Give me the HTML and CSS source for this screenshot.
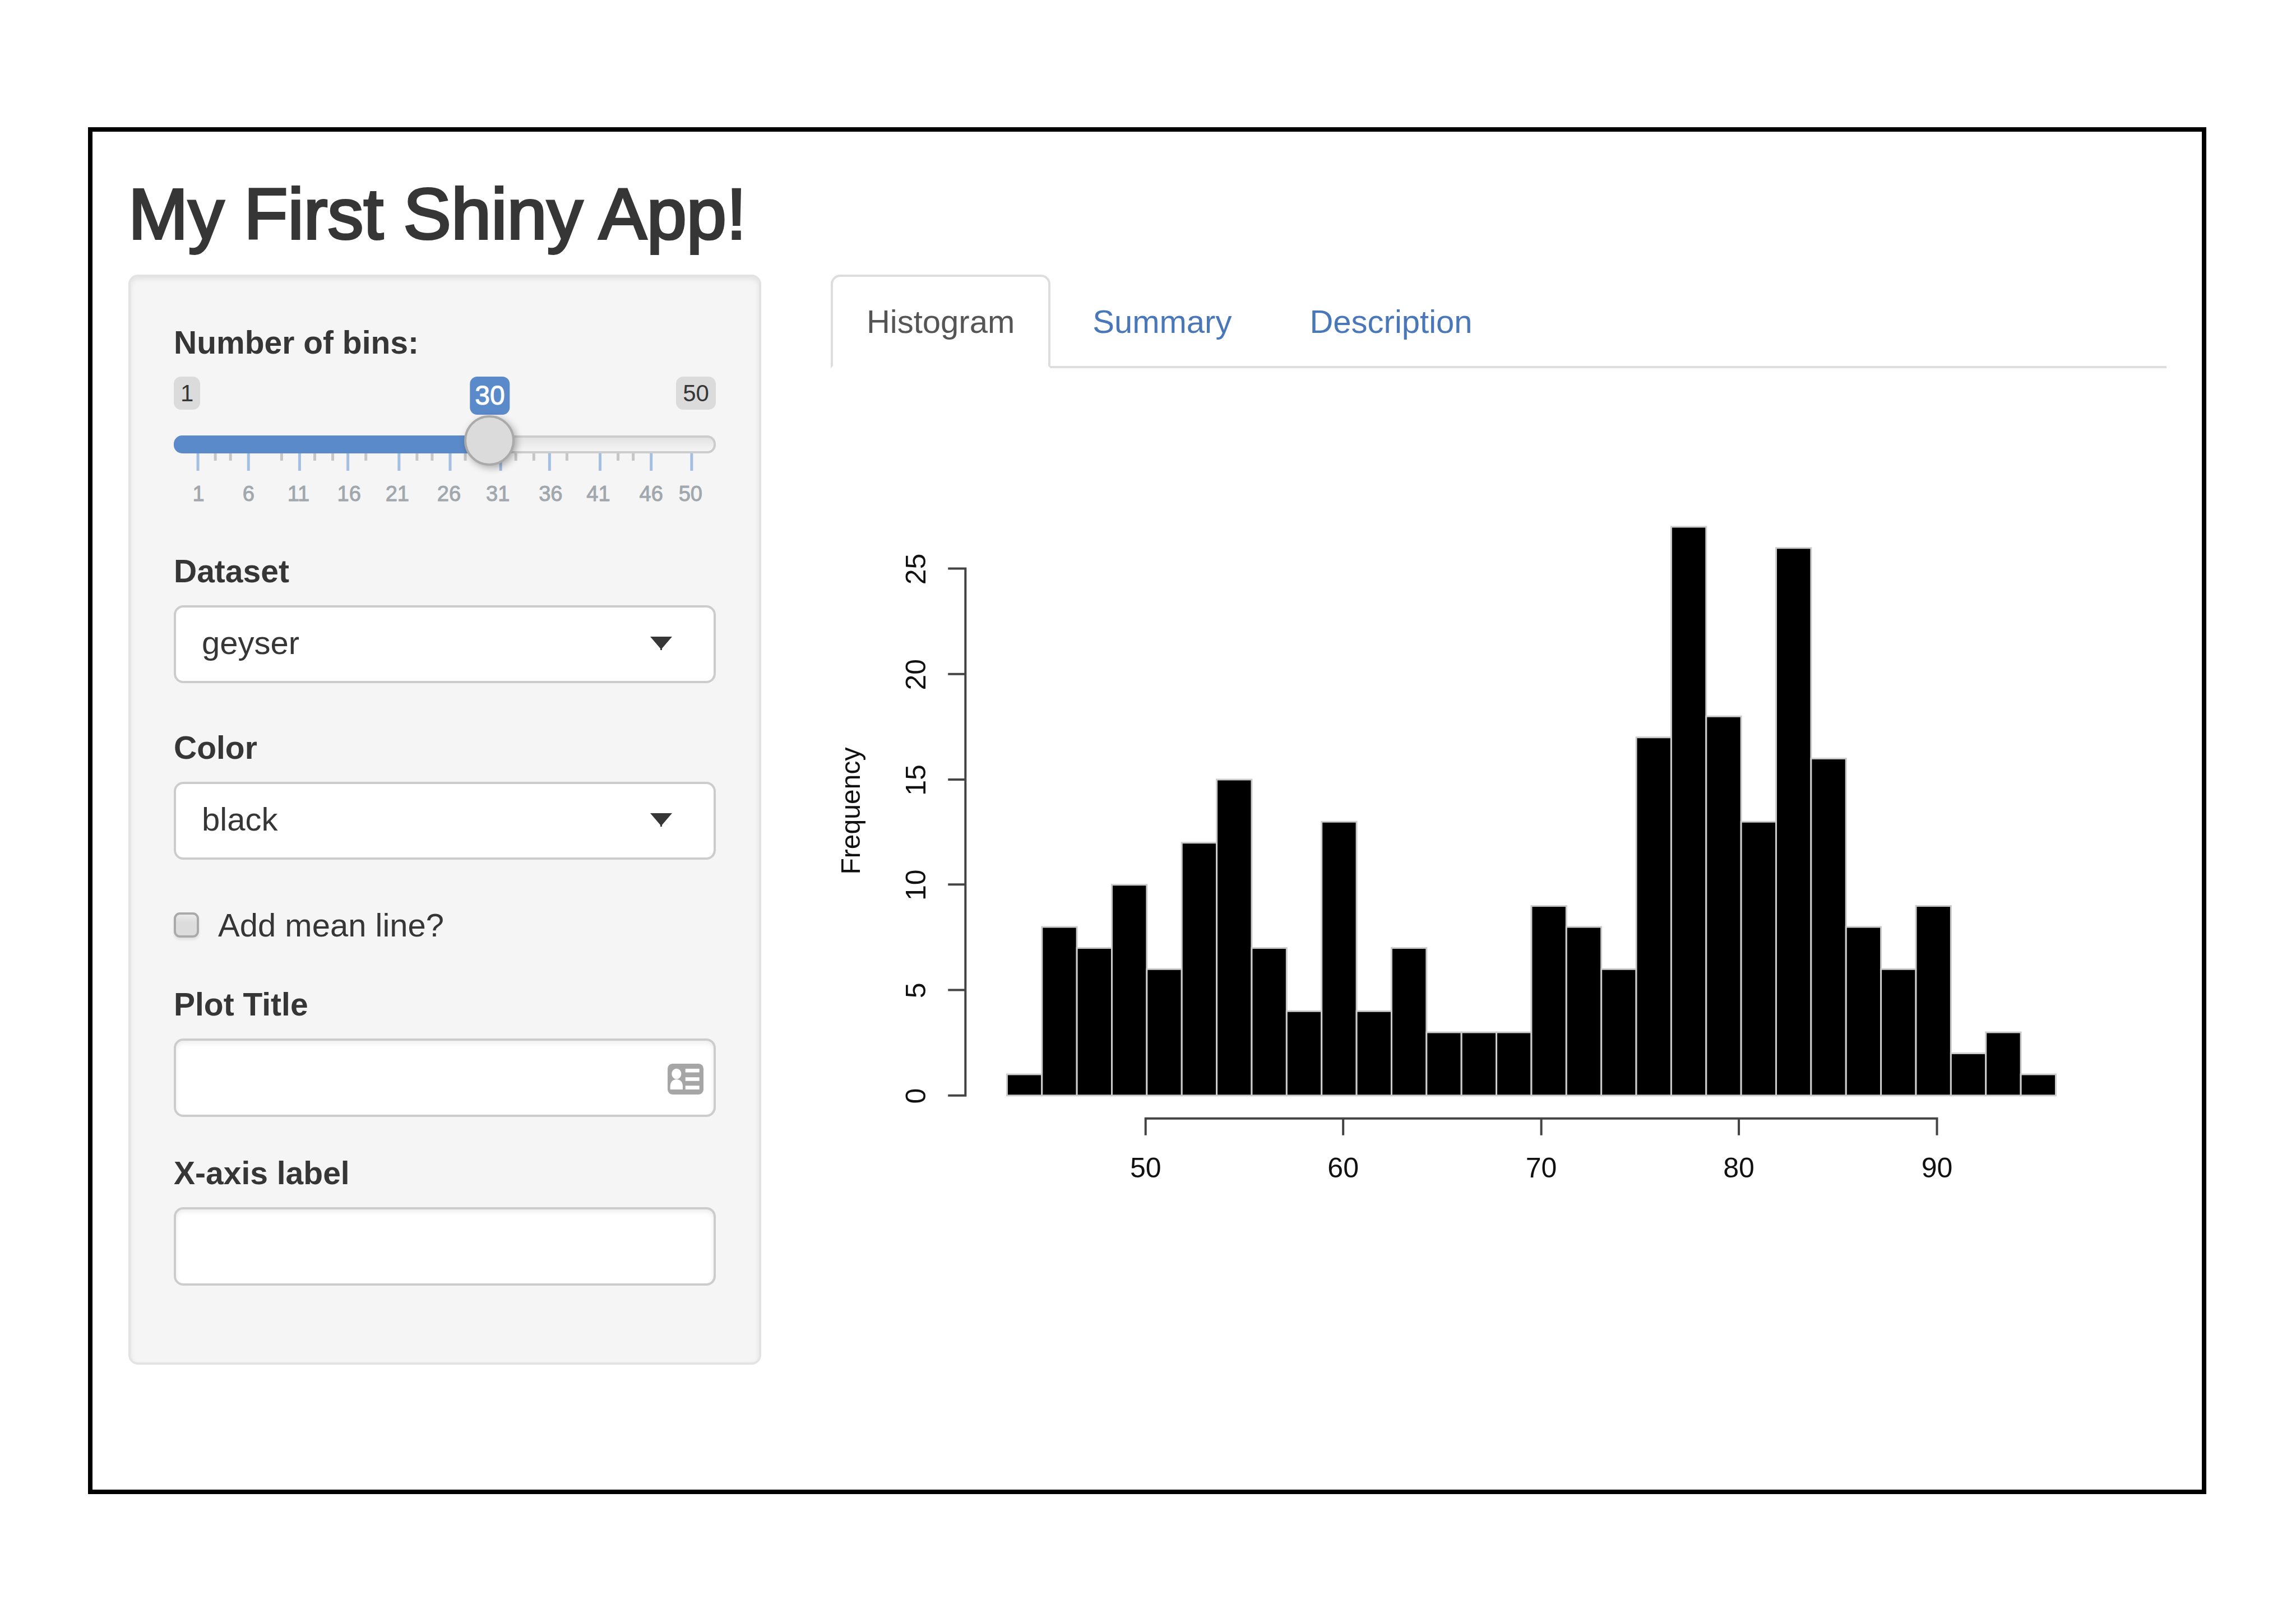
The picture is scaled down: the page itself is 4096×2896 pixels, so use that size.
FILE: index.html
```html
<!DOCTYPE html>
<html lang="en">
<head>
<meta charset="utf-8">
<title>My First Shiny App!</title>
<link rel="stylesheet" href="styles.css">
</head>
<body>
<main class="frame">
  <h1 class="title">My First Shiny App!</h1>
  <div class="layout">
    <form class="panel">
      <div class="group group-slider">
        <label class="label" for="bins">Number of bins:</label>
        <div class="slider">
          <div class="bounds">
            <span class="bound">1</span>
            <output class="current" for="bins">30</output>
            <span class="bound">50</span>
          </div>
          <input class="range" type="range" id="bins" min="1" max="50" value="30">
          <svg class="scale" viewBox="0 0 965 100" aria-hidden="true">
            <path class="minor" d="M74 0v13M101 0v13M192 0v13M251 0v13M283 0v13M342 0v13M433 0v13M460 0v13M519 0v13M609 0v13M641 0v13M700 0v13M791 0v13M818 0v13"/>
            <path class="major" d="M43 0v31M133 0v31M224 0v31M310 0v31M401 0v31M492 0v31M582 0v31M669 0v31M759 0v31M850 0v31M922 0v31"/>
            <g class="numbers">
              <text x="44" y="85">1</text><text x="133" y="85">6</text><text x="222" y="85">11</text><text x="312" y="85">16</text><text x="398" y="85">21</text><text x="490" y="85">26</text><text x="577" y="85">31</text><text x="671" y="85">36</text><text x="756" y="85">41</text><text x="850" y="85">46</text><text x="920" y="85">50</text>
            </g>
          </svg>
        </div>
      </div>

      <div class="group group-select">
        <label class="label" for="dataset">Dataset</label>
        <div class="field">
          <select class="control select" id="dataset"><option>geyser</option></select>
          <svg class="caret" viewBox="0 0 39 24" aria-hidden="true"><path d="M0 0h39L21 21v3h-3v-3z"/></svg>
        </div>
      </div>

      <div class="group group-select">
        <label class="label" for="color">Color</label>
        <div class="field">
          <select class="control select" id="color"><option>black</option></select>
          <svg class="caret" viewBox="0 0 39 24" aria-hidden="true"><path d="M0 0h39L21 21v3h-3v-3z"/></svg>
        </div>
      </div>

      <label class="group check"><input class="box" type="checkbox" id="mean">Add mean line?</label>

      <div class="group">
        <label class="label" for="plot-title">Plot Title</label>
        <div class="field">
          <input class="control" type="text" id="plot-title">
          <svg class="contact" viewBox="0 0 218 187" aria-hidden="true">
            <rect width="218" height="187" rx="30" fill="#a6a6a6"/>
            <g fill="#fff"><ellipse cx="54" cy="62" rx="29" ry="32"/><path d="M16 157v-20c0-24 14-42 38-42s38 18 38 42v20z"/><path d="M108 31h85v22h-85zM108 83h85v22h-85zM108 134h85v23h-85z"/></g>
          </svg>
        </div>
      </div>

      <div class="group">
        <label class="label" for="x-label">X-axis label</label>
        <div class="field"><input class="control" type="text" id="x-label"></div>
      </div>
    </form>

    <section class="content">
      <nav class="tabs">
        <a class="tab active" href="#histogram">Histogram</a>
        <a class="tab" href="#summary">Summary</a>
        <a class="tab" href="#description">Description</a>
      </nav>
      <svg class="plot" id="histogram" viewBox="0 -1 2380 1540" role="img" aria-label="Histogram of the geyser dataset">
        <g class="bars" transform="translate(314 1295) scale(62.29 -37.53)">
          <rect x="0" width="1" height="1"/><rect x="1" width="1" height="8"/><rect x="2" width="1" height="7"/><rect x="3" width="1" height="10"/><rect x="4" width="1" height="6"/>
          <rect x="5" width="1" height="12"/><rect x="6" width="1" height="15"/><rect x="7" width="1" height="7"/><rect x="8" width="1" height="4"/><rect x="9" width="1" height="13"/>
          <rect x="10" width="1" height="4"/><rect x="11" width="1" height="7"/><rect x="12" width="1" height="3"/><rect x="13" width="1" height="3"/><rect x="14" width="1" height="3"/>
          <rect x="15" width="1" height="9"/><rect x="16" width="1" height="8"/><rect x="17" width="1" height="6"/><rect x="18" width="1" height="17"/><rect x="19" width="1" height="27"/>
          <rect x="20" width="1" height="18"/><rect x="21" width="1" height="13"/><rect x="22" width="1" height="26"/><rect x="23" width="1" height="16"/><rect x="24" width="1" height="8"/>
          <rect x="25" width="1" height="6"/><rect x="26" width="1" height="9"/><rect x="27" width="1" height="2"/><rect x="28" width="1" height="3"/><rect x="29" width="1" height="1"/>
        </g>
        <path class="axis" d="M209 356H240V1295H209M209 544h31M209 732h31M209 919h31M209 1107h31"/>
        <path class="axis" d="M561 1366V1336H1971V1366M913 1336v30M1266 1336v30M1618 1336v30"/>
        <g class="ticks">
          <text x="561" y="1441">50</text><text x="913" y="1441">60</text><text x="1266" y="1441">70</text><text x="1618" y="1441">80</text><text x="1971" y="1441">90</text>
          <text transform="translate(169 1296) rotate(-90)">0</text>
          <text transform="translate(169 1108) rotate(-90)">5</text>
          <text transform="translate(169 920) rotate(-90)">10</text>
          <text transform="translate(169 733) rotate(-90)">15</text>
          <text transform="translate(169 545) rotate(-90)">20</text>
          <text transform="translate(169 357) rotate(-90)">25</text>
          <text class="axis-title" transform="translate(52 788) rotate(-90)">Frequency</text>
        </g>
      </svg>
    </section>
  </div>
</main>
</body>
</html>
```
FILE: styles.css
```css
* {
  box-sizing: border-box;
}

body {
  margin: 0;
  padding: 227px 160px 231px 157px;
  background: #fff;
  color: #363636;
  font-family: "Liberation Sans", Arial, sans-serif;
  font-size: 58px;
  line-height: 83px;
}

.frame {
  padding: 77px 63px 223px 64px;
  border: 8px solid #000;
}

.title {
  margin: 0 0 38px;
  font-size: 128px;
  font-weight: 400;
  line-height: 140px;
  -webkit-text-stroke: 4px #363636;
}

.layout {
  display: grid;
  grid-template-columns: 31.05% minmax(0, 1fr);
  column-gap: 124px;
  align-items: start;
}

/* Sidebar */
.panel {
  padding: 77px;
  border: 4px solid #e3e3e3;
  border-radius: 17px;
  background: #f5f5f5;
  box-shadow: inset 0 4px 8px rgba(0, 0, 0, .08);
}

.group {
  margin-bottom: 60px;
}

.group-slider {
  margin-bottom: 70px;
}

.group-select {
  margin-bottom: 75px;
}

.label {
  display: block;
  margin-bottom: 20px;
  font-size: 57px;
  font-weight: 700;
  line-height: 81px;
}

.field {
  position: relative;
}

.control {
  display: block;
  width: 100%;
  height: 140px;
  padding: 0 46px;
  border: 4px solid #ccc;
  border-radius: 17px;
  background: #fff;
  box-shadow: inset 0 4px 8px rgba(0, 0, 0, .08);
  color: #363636;
  font: inherit;
}

.select {
  height: 139px;
  padding-bottom: 7px;
  appearance: none;
  box-shadow: none;
}

.caret {
  position: absolute;
  top: 56px;
  right: 78px;
  width: 39px;
  fill: #363636;
}

.contact {
  position: absolute;
  top: 45px;
  right: 22px;
  width: 64px;
}

.check {
  display: flex;
  align-items: center;
  gap: 34px;
}

.box {
  width: 45px;
  height: 45px;
  margin: 0;
  border: 4px solid #aaa;
  border-radius: 11px;
  appearance: none;
  background: linear-gradient(#eaeaea, #dcdcdc 40%);
  box-shadow: 0 4px 4px rgba(0, 0, 0, .08);
}

/* Slider */
.bounds {
  position: relative;
  display: flex;
  justify-content: space-between;
  align-items: flex-start;
  height: 68px;
  margin-bottom: 37px;
}

.bound,
.current {
  padding: 0 12px;
  border-radius: 13px;
  background: #dbdbdb;
  font-size: 42px;
  line-height: 59px;
}

.current {
  position: absolute;
  left: calc(45px + (100% - 90px) * 29 / 49);
  padding: 0 9px;
  background: #5b8acb;
  color: #fff;
  font-size: 48px;
  line-height: 68px;
  transform: translateX(-50%);
  -webkit-text-stroke: 1px #fff;
}

.range {
  position: relative;
  display: block;
  width: 100%;
  height: 32px;
  margin: 0;
  appearance: none;
  background: none;
}

.range::-webkit-slider-runnable-track {
  height: 32px;
  border: 4px solid transparent;
  border-radius: 15px;
  background:
    linear-gradient(90deg, #5b8acb 58%, transparent 58%) border-box,
    linear-gradient(#e3e3e3, #f5f5f5) padding-box,
    #ccc border-box;
}

.range::-webkit-slider-thumb {
  width: 90px;
  height: 90px;
  margin-top: -40px;
  border: 4px solid #aaa;
  border-radius: 50%;
  appearance: none;
  background: #dbdbdb;
  box-shadow: 4px 4px 13px rgba(0, 0, 0, .3);
}

.scale {
  display: block;
  width: 100%;
}

.minor,
.major {
  stroke-width: 5px;
  stroke: #c6c6c6;
}

.major {
  stroke: #a5bfe2;
}

.numbers {
  fill: #a0a7ad;
  stroke: #a0a7ad;
  font-size: 38px;
  text-anchor: middle;
}

/* Main column */
.tabs {
  display: flex;
  gap: 11px;
  border-bottom: 4px solid #ddd;
}

.tab {
  margin-bottom: -4px;
  padding: 38px 60px;
  border: 4px solid transparent;
  border-radius: 17px 17px 0 0;
  color: #4a77b8;
  text-decoration: none;
}

.tab.active {
  border-color: #ddd #ddd #fff;
  background: #fff;
  color: #555;
}

.plot {
  display: block;
  width: 100%;
}

.bars rect {
  stroke: #ccc;
  stroke-width: 3px;
  vector-effect: non-scaling-stroke;
}

.axis {
  fill: none;
  stroke: #444;
  stroke-width: 4px;
}

.ticks {
  fill: #111;
  font-size: 50px;
  text-anchor: middle;
}

.axis-title {
  font-size: 48px;
}
```
